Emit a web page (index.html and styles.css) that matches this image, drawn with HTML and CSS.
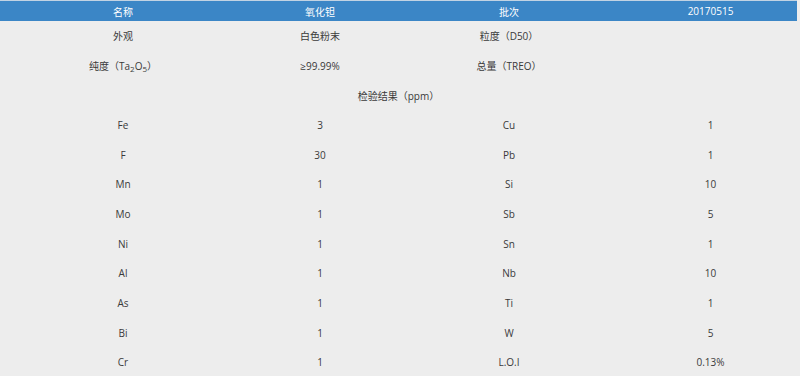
FILE: index.html
```html
<!DOCTYPE html>
<html lang="zh-CN">
<head>
<meta charset="utf-8">
<title>氧化钽</title>
<link rel="stylesheet" href="styles.css">
</head>
<body>
<div class="page">
<table class="spec">
  <colgroup>
    <col class="c1"><col class="c2"><col class="c3"><col class="c4">
  </colgroup>
  <thead>
    <tr class="head">
      <th>名称</th><th>氧化钽</th><th>批次</th><th>20170515</th>
    </tr>
  </thead>
  <tbody>
    <tr><td>外观</td><td>白色粉末</td><td>粒度（D50）</td><td></td></tr>
    <tr><td>纯度（Ta<sub>2</sub>O<sub>5</sub>）</td><td>≥99.99%</td><td>总量（TREO）</td><td></td></tr>
    <tr><td colspan="4">检验结果（ppm）</td></tr>
    <tr><td>Fe</td><td>3</td><td>Cu</td><td>1</td></tr>
    <tr><td>F</td><td>30</td><td>Pb</td><td>1</td></tr>
    <tr><td>Mn</td><td>1</td><td>Si</td><td>10</td></tr>
    <tr><td>Mo</td><td>1</td><td>Sb</td><td>5</td></tr>
    <tr><td>Ni</td><td>1</td><td>Sn</td><td>1</td></tr>
    <tr><td>Al</td><td>1</td><td>Nb</td><td>10</td></tr>
    <tr><td>As</td><td>1</td><td>Ti</td><td>1</td></tr>
    <tr><td>Bi</td><td>1</td><td>W</td><td>5</td></tr>
    <tr><td>Cr</td><td>1</td><td>L.O.I</td><td>0.13%</td></tr>
  </tbody>
</table>
</div>
</body>
</html>
```
FILE: styles.css
```css
html, body {
  margin: 0;
  padding: 0;
  background: #ededed;
}
.page {
  border-top: 1px solid #c2d3e3;
  width: 797px;
}
.spec {
  width: 797px;
  border-collapse: collapse;
  table-layout: fixed;
  font-family: "Open Sans", "Noto Sans CJK SC", sans-serif;
  font-size: 10px;
  color: #3a3a3a;
}
.c1 { width: 246px; }
.c2 { width: 148px; }
.c3 { width: 230px; }
.c4 { width: 173px; }
.spec th, .spec td {
  padding: 0;
  text-align: center;
  font-weight: normal;
}
.head {
  background: #3b86c6;
  color: #fff;
  height: 20px;
}
.spec tbody tr {
  height: 29.7px;
}
.spec sub {
  font-size: 8px;
  vertical-align: -2px;
  line-height: 0;
}
```
